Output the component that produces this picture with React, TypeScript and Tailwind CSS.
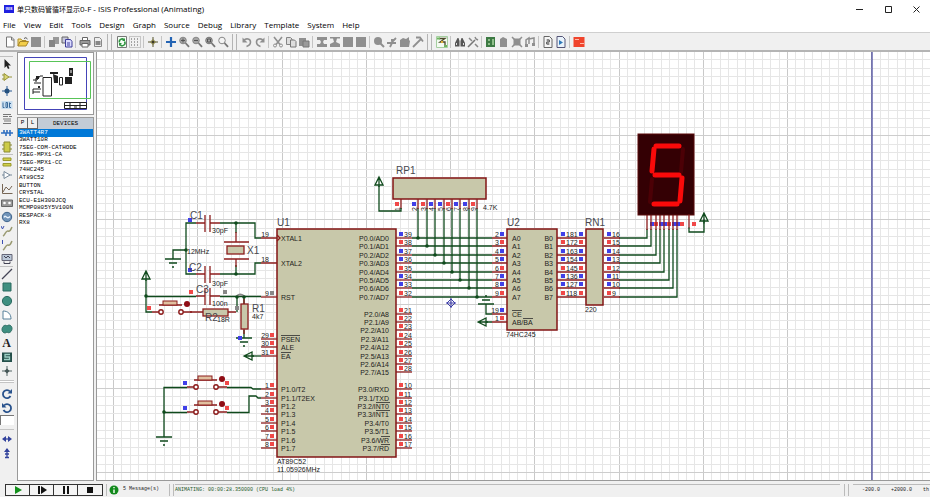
import React from "react";

type P = { children?: React.ReactNode };

const GREEN = "#0f4a1c";
const RED = "#8c1c1c";
const BODY = "#c8c8aa";
const HOT = "#f04848";
const COLD = "#4040e8";
const IDLE = "#888888";

/* Schematic row k, counted from the first pin of U1 */
const Y = (k: number) => Math.round(238 + 8.4 * k);
const BUS = [COLD, HOT, COLD, COLD, HOT, COLD, COLD, HOT];

/* ---------- icons ---------- */

const Ico = ({ children }: P) => (
  <svg viewBox="0 0 12 12" className="h-3 w-3 shrink-0" fill="none" aria-hidden="true">
    {children}
  </svg>
);

const G = "#8f8f8f";

const Zoom = ({ mark, dark }: { mark: string; dark?: boolean }) => (
  <Ico>
    <circle cx="5" cy="4.5" r="3.3" fill={mark === "" ? "#f4f4f4" : "#a4a4a4"} stroke={dark ? "#777" : "#888"} />
    <path d="M7.5 7l3.5 3.8" stroke="#777" strokeWidth="1.8" />
    <path d={mark} stroke="#555" />
  </Ico>
);

const TOOLS: Record<string, React.ReactNode> = {
  "New design": <Ico><path d="M2.5 1h5l2.500 2.500V11h-7.500z" fill="#fff" stroke="#777" /><path d="M7.500 1v3H10" stroke="#777" /></Ico>,
  "Open design": <Ico><path d="M1 10V3h3l1 1.500h4V6" fill="#f6df7a" stroke="#b0902c" /><path d="M1 10l2-4.500h8.500L9 10z" fill="#f3cf4a" stroke="#a8862a" /><path d="M7 2.500q2-2 3.500.5" stroke="#555" /></Ico>,
  "Save design": <Ico><rect x="1" y="1" width="10" height="10" fill={G} /></Ico>,
  "Import section": <Ico><path d="M5 1h6v7H5z" fill="#999" /><path d="M1 4h6v7H1z" fill="#858585" /></Ico>,
  "Export section": <Ico><path d="M1 1h6v6H1z" fill="#c8c8dc" stroke="#666" /><path d="M4.500 3.500h5l1.500 2V11H4.500z" fill="#dcdcff" stroke="#3c3c98" /><path d="M6 7h3M6 9h3" stroke="#3c3c98" /></Ico>,
  "Print": <Ico><path d="M3.500 4V1.500h5V4" fill="#fff" stroke="#666" /><path d="M1 4.500h10V9H1z" fill="#999" stroke="#666" /><path d="M3 7.500h6V11H3z" fill="#fff" stroke="#666" /></Ico>,
  "Set area": <Ico><path d="M2.500 1.500h5l2 2v7h-7z" fill="#eee" stroke="#888" /><path d="M3.500 5h5v4h-5z" fill="#888" /></Ico>,
  "Redraw": <Ico><path d="M1.500.5h9v11h-9z" fill="#f4fff4" stroke="#777" /><path d="M3.500 6.500A2.600 2.600 0 018 4M8.500 5.500A2.600 2.600 0 014 8.500" stroke="#2f9440" strokeWidth="1.500" /><path d="M9 2v3H6zM3 10V7h3z" fill="#2f9440" /></Ico>,
  "Toggle grid": <Ico><path d="M0 .5h12M0 11.500h12M.5 0v12M11.500 0v12" stroke="#c6c6c6" /><path d="M2 3h9M2 6h9M2 9h9" stroke="#555" strokeDasharray="1 2" /></Ico>,
  "Origin": <Ico><path d="M6 1v10M1 6h10" stroke="#55532c" /><path d="M6 3l3 3-3 3-3-3z" fill="#86814a" /><circle cx="6" cy="6" r="1" fill="#222" /></Ico>,
  "Pan": <Ico><path d="M6 1v10M1 6h10" stroke="#2464b4" strokeWidth="2.200" /></Ico>,
  "Zoom in": <Zoom mark="M3 4.500h4M5 2.500v4" />,
  "Zoom out": <Zoom mark="M3 4.500h4" />,
  "Zoom all": <Zoom mark="M3.500 3h3v3h-3z" dark />,
  "Zoom area": <Zoom mark="" />,
  "Undo": <Ico><path d="M2.500 4.500c3-3 7-1.500 7 1.500S7 10 5.500 10.500" stroke={G} strokeWidth="1.600" /><path d="M1.500 1.500v5h5z" fill={G} /></Ico>,
  "Redo": <Ico><path d="M9.500 4.500c-3-3-7-1.500-7 1.500S5 10 6.500 10.500" stroke={G} strokeWidth="1.600" /><path d="M10.500 1.500v5h-5z" fill={G} /></Ico>,
  "Cut": <Ico><path d="M2 1l6 7.500M10 1L4 8.500" stroke={G} strokeWidth="1.600" /><circle cx="3" cy="9.500" r="1.500" stroke={G} /><circle cx="9" cy="9.500" r="1.500" stroke={G} /></Ico>,
  "Copy": <Ico><path d="M1.500 1.500h4l1.500 1.500v5.500H1.500z" fill="#ddd" stroke="#858585" /><path d="M5.500 4h4L11 5.500V11H5.500z" fill="#ddd" stroke="#777" /></Ico>,
  "Paste": <Ico><path d="M1 2h7v8H1z" fill={G} /><path d="M5 5h6v6H5z" fill="#9a9a9a" stroke="#777" /></Ico>,
  "Block copy": <Ico><path d="M1 1h10v3H8l-1 2 1 2h3v3H1V8h3l1-2-1-2H1z" fill={G} /></Ico>,
  "Block move": <Ico><path d="M1 1h10v1.500H8L7 6l4 2v3H1V8l4-2-1-3.500H1z" fill={G} /></Ico>,
  "Block rotate": <Ico><rect x="1" y="1" width="10" height="10" fill={G} /></Ico>,
  "Block delete": <Ico><rect x="1" y="1" width="10" height="10" fill={G} /></Ico>,
  "Pick parts": <Ico><circle cx="5" cy="5" r="4" fill={G} /><path d="M7 7l4 4" stroke={G} strokeWidth="2" /></Ico>,
  "Make device": <Ico><path d="M1 7h4l5-5M4 11l2-4h4M5 4h4" stroke={G} strokeWidth="1.800" /></Ico>,
  "Packaging tool": <Ico><path d="M1 4l3-2 3 1 3-2v3l1 1-1 6H1z" fill={G} /></Ico>,
  "Decompose": <Ico><path d="M1 11l8-8" stroke={G} strokeWidth="1.800" /><path d="M4 1.500h4l3 4" stroke={G} strokeWidth="1.800" /></Ico>,
  "Wire autorouter": <Ico><path d="M.5.500h11v11H.5z" fill="#f3faf0" stroke="#a5cfa0" /><path d="M3 2.500h6L4 6h5v4" stroke="#4c4a2a" strokeWidth="1.300" /><path d="M1 1.500h3v2H1zM8 9h3v2H8z" fill="#6fb560" /><path d="M5 5h2v2H5z" fill="#dcae34" /></Ico>,
  "Search and tag": <Ico><path d="M2 5l1.500-3h1L5.500 5v5.500H1V7zM10 5L8.500 2h-1L6.500 5v5.500H11V7z" fill="#555" /><path d="M2.500 7v2M9.500 7v2" stroke="#ddd" /></Ico>,
  "Property tool": <Ico><path d="M1 11l7-7" stroke="#777" strokeWidth="1.600" /><path d="M2 2l3 3M8 1l1 2 2 1M8 8l3 3" stroke="#888" strokeWidth="1.500" /></Ico>,
  "Design explorer": <Ico><path d="M1 1h9v10H1z" fill="#3d7a44" /><path d="M3 3h2v2H3zM3 7h2v2H3zM7 3h2v6H7z" fill="#8fbf8a" /></Ico>,
  "New sheet": <Ico><path d="M2 3l3-2 4 2v8H2z" fill={G} /></Ico>,
  "Remove sheet": <Ico><path d="M2.500 2.500h7v7h-7z" fill={G} /><path d="M1 1l10 10M11 1L1 11" stroke={G} strokeWidth="1.500" /></Ico>,
  "Exit to parent": <Ico><path d="M2 9V4l3-2v6M5 3l5-1v6" stroke={G} strokeWidth="1.500" /><path d="M1 8h3v3H1zM8 7h3v3H8z" fill={G} /></Ico>,
  "Bill of materials": <Ico><path d="M2 .5h5.500L10 3v8.500H2z" fill="#f6f6f6" stroke="#666" /><path d="M6 3v6M4.500 4h3v2h-3v2h3" stroke="#666" /></Ico>,
  "Electrical rules check": <Ico><path d="M2 .5h5.500L10 3v8.500H2z" fill="#e9f3fb" stroke="#557" /><path d="M4 4v5l4-2.500z" fill="#2f78b8" /></Ico>,
  "Netlist to ARES": <Ico><path d="M.5 1h11v10H.5z" fill="#f0442c" /><path d="M2 3h4v1H2zM7 7h4v1H7z" fill="#ffb9a8" /></Ico>,
};

const TOOL_GROUPS: string[][][] = [
  [["New design", "Open design", "Save design"], ["Import section", "Export section"], ["Print", "Set area"]],
  [["Redraw", "Toggle grid"], ["Origin"], ["Pan", "Zoom in", "Zoom out", "Zoom all", "Zoom area"]],
  [["Undo", "Redo"], ["Cut", "Copy", "Paste"], ["Block copy", "Block move", "Block rotate", "Block delete"], ["Pick parts", "Make device", "Packaging tool", "Decompose"]],
  [["Wire autorouter"], ["Search and tag", "Property tool"], ["Design explorer", "New sheet", "Remove sheet", "Exit to parent"], ["Bill of materials", "Electrical rules check"], ["Netlist to ARES"]],
];

const TEAL = "#3f8f80";

const MODES: [string, React.ReactNode][] = [
  ["Selection", <path d="M3.500 1v9l2-2 1.500 3 1.500-.8L7.200 7.500H10z" fill="#222" />],
  ["Component", <path d="M3 2.500l5 3.500-5 3.500zM1 4h2M1 8h2M8 6h3" fill="#d9d676" stroke="#97943a" />],
  ["Junction dot", <><path d="M6 1v10M1 6h10" stroke="#2a5a94" /><circle cx="6" cy="6" r="2.500" fill="#24507e" /></>],
  ["Wire label", <><path d="M.5 2h11v8H.5z" fill="#c9def0" /><path d="M2 3.500v5h1.500M5 3.500v5h1.500v-5zM8.500 3.500v5H10M10 4.500H8.500" stroke="#3a6a9a" /></>],
  ["Text script", <path d="M2 1.500h8M2 3.500h5M8 3.500h3M2 6h8M3 8h7M2 10.500h8" stroke="#777" />],
  ["Bus", <path d="M0 6h12M3 3v3M6 6V3M5 6v3M9 9V6M9 3v3" stroke="#2f6fc0" strokeWidth="1.600" />],
  ["Subcircuit", <><path d="M3 1h6v10H3z" fill="#cccb48" stroke="#8a8932" /><path d="M1 4h2M1 8h2M9 4h2M9 8h2" stroke="#8a8932" /></>],
  ["Terminals", <path d="M2 2h8v2.500H2zM2 7.500h8V10H2z" fill="#d0cf48" stroke="#99982f" />],
  ["Device pins", <path d="M3 2.500l6 3.500-6 3.500zM1 6h2M9 6h2" fill="#fff" stroke="#789" />],
  ["Graph", <path d="M1.500 1v9.500h10M2 9l3-5 3 3 3-4" stroke="#765" />],
  ["Tape recorder", <><path d="M.5 3h11v6.500H.5z" fill="#999" stroke="#666" /><circle cx="3.500" cy="6" r="1.300" fill="#fff" /><circle cx="8.500" cy="6" r="1.300" fill="#fff" /></>],
  ["Generator", <><circle cx="6" cy="6" r="4.700" fill="#6f93b8" stroke="#40648c" /><path d="M3 6.500c1.500-4 2.500 3 6-1" stroke="#e7f1fb" strokeWidth="1.400" /></>],
  ["Voltage probe", <><path d="M0 1l1.500 3L3 1" stroke="#3b4fb0" /><path d="M2 11c2-1 3-6 5-5s3-2 4-4" stroke="#9a9a72" strokeWidth="1.500" /></>],
  ["Current probe", <><path d="M1.500 1v4" stroke="#3b4fb0" /><path d="M2 11c2-1 3-6 5-5s3-2 4-4" stroke="#9a9a72" strokeWidth="1.500" /></>],
  ["Virtual instruments", <><path d="M1 1.500h10v6H1z" fill="#b9c6d6" stroke="#667" /><path d="M3 3l2 2 2-2 2 2M3 8.500v2h6v-2" stroke="#445" /></>],
  ["2D line", <path d="M1 11L11 1" stroke="#445" strokeWidth="1.200" />],
  ["2D box", <path d="M2 2h8v8H2z" fill={TEAL} stroke="#2c6a60" />],
  ["2D circle", <circle cx="6" cy="6" r="4.600" fill={TEAL} stroke="#2c6a60" />],
  ["2D arc", <path d="M2 2c5 0 8 3 8 8H2z" fill="#fff" stroke="#56809a" />],
  ["2D path", <path d="M6 3c2-2 5-.5 5 2.500S8 11 6 9c-2 2-5 .5-5-2.500S4 1 6 3z" fill={TEAL} stroke="#2c6a60" />],
  ["2D text", null],
  ["2D symbol", <><path d="M1 1.500h10v9.500H1z" fill="#244f4a" /><path d="M9 3.500H4V6h4.500v2.500H3" stroke="#9ed1c6" strokeWidth="1.300" /></>],
  ["2D marker", <><path d="M6 1v10M1 6h10" stroke="#566" /><path d="M6 3.500L8.500 6 6 8.500 3.500 6z" fill="#455" /></>],
];

/* ---------- schematic parts ---------- */

const W = ({ d, c = GREEN }: { d: string; c?: string }) => <path d={d} stroke={c} strokeWidth="1.300" fill="none" />;
const Sq = ({ x, y, c }: { x: number; y: number; c: string }) => <rect x={x - 2} y={y - 2} width="4" height="4" fill={c} />;
const Dot = ({ x, y }: { x: number; y: number }) => <circle cx={x} cy={y} r="1.800" fill={GREEN} />;
const Box = ({ x, y, w, h }: { x: number; y: number; w: number; h: number }) => (
  <rect x={x} y={y} width={w} height={h} fill={BODY} stroke="#821414" strokeWidth="1.500" />
);
const T = ({ x, y, end, bar, children }: P & { x: number; y: number; end?: boolean; bar?: [number, number] }) => (
  <>
    <text x={x} y={y} textAnchor={end ? "end" : "start"} className="fill-[#1c1c1c] text-[7px]">{children}</text>
    {bar && <path d={`M${bar[0]} ${y - 6.5}H${bar[1]}`} stroke="#2c2c2c" strokeWidth=".8" />}
  </>
);
const Ref = ({ x, y, children }: P & { x: number; y: number }) => (
  <text x={x} y={y} className="fill-[#48484e] text-[10px]">{children}</text>
);
const Ground = ({ x, y, up }: { x: number; y: number; up?: boolean }) => {
  const s = up ? -1 : 1;
  return <W d={`M${x - 8} ${y}h16M${x - 4} ${y + 4 * s}h8M${x - 1} ${y + 8 * s}h2`} />;
};
const PowerUp = ({ x, y }: { x: number; y: number }) => <W d={`M${x} ${y}l4 8h-8zM${x} ${y}v10`} />;
const ArrowLeft = ({ x, y }: { x: number; y: number }) => <W d={`M${x} ${y}l8-4v8zM${x} ${y}h10`} />;

const Cap = ({ y }: { y: number }) => (
  <W c={RED} d={`M196 ${y}h9M205 ${y - 8}v17M210 ${y - 8}v17M210 ${y}h10`} />
);
const Push = ({ x, y }: { x: number; y: number }) => (
  <g>
    <W c={RED} d={`M${x - 9} ${y}h7M${x + 22} ${y}h9M${x - 2} ${y - 7}h23`} />
    <rect x={x + 2} y={y - 11} width="14" height="4" fill="#e0c0a0" stroke={RED} />
    <circle cx={x} cy={y} r="2.200" fill="#fff" stroke={RED} strokeWidth="1.400" />
    <circle cx={x + 20} cy={y} r="2.200" fill="#fff" stroke={RED} strokeWidth="1.400" />
    <circle cx={x + 26} cy={y - 8} r="3" fill="#8f0c14" />
  </g>
);

const PORT2 = ["P2.0/A8", "P2.1/A9", "P2.2/A10", "P2.3/A11", "P2.4/A12", "P2.5/A13", "P2.6/A14", "P2.7/A15"];
const PORT3 = ["P3.0/RXD", "P3.1/TXD", "P3.2/INT0", "P3.3/INT1", "P3.4/T0", "P3.5/T1", "P3.6/WR", "P3.7/RD"];
const PORT3_BAR: Record<number, number> = { 2: 376, 3: 376, 6: 381, 7: 381 };
const PORT1 = ["P1.0/T2", "P1.1/T2EX", "P1.2", "P1.3", "P1.4", "P1.5", "P1.6", "P1.7"];

const RightPin = ({ k, n, name, c = HOT, bar }: { k: number; n: number; name: string; c?: string; bar?: [number, number] }) => (
  <g>
    <W c={RED} d={`M396 ${Y(k)}h16`} />
    <Sq x={401} y={Y(k) - 4} c={c} />
    <T x={404} y={Y(k) - 1}>{n}</T>
    <T x={389} y={Y(k) + 3} end bar={bar}>{name}</T>
  </g>
);
const LeftPin = ({ k, n, name, c = HOT, bar }: { k: number; n: number; name: string; c?: string; bar?: [number, number] }) => (
  <g>
    <W c={RED} d={`M261 ${Y(k)}h16`} />
    <Sq x={272} y={Y(k) - 4} c={c} />
    <T x={269} y={Y(k) - 1} end>{n}</T>
    <T x={281} y={Y(k) + 3} bar={bar}>{name}</T>
  </g>
);

const Microcontroller = () => (
  <g>
    <Box x={277} y={229} w={119} h={228} />
    <Ref x={277} y={226}>U1</Ref>
    <T x={277} y={464}>AT89C52</T>
    <T x={277} y={472}>11.05926MHz</T>
    {BUS.map((c, i) => <RightPin key={i} k={i} n={39 - i} name={`P0.${i}/AD${i}`} c={c} />)}
    {PORT2.map((s, i) => <RightPin key={s} k={9 + i} n={21 + i} name={s} />)}
    {PORT3.map((s, i) => <RightPin key={s} k={18 + i} n={10 + i} name={s} bar={PORT3_BAR[i] ? [PORT3_BAR[i], 390] : undefined} />)}
    {PORT1.map((s, i) => <LeftPin key={s} k={18 + i} n={1 + i} name={s} />)}
    <LeftPin k={7} n={9} name="RST" c={IDLE} />
    <LeftPin k={12} n={29} name="PSEN" bar={[281, 300]} />
    <LeftPin k={13} n={30} name="ALE" />
    <LeftPin k={14} n={31} name="EA" bar={[281, 291]} />
    <W c={RED} d={`M261 ${Y(0)}h16M261 ${Y(3)}h16M277 ${Y(0) - 3}l3 3-3 3`} />
    <T x={269} y={Y(0) - 1} end>19</T>
    <T x={269} y={Y(3) - 1} end>18</T>
    <T x={281} y={Y(0) + 3}>XTAL1</T>
    <T x={281} y={Y(3) + 3}>XTAL2</T>
  </g>
);

const Oscillator = () => (
  <g>
    <W d="M196 223H186V274H196M220 223H255V238H261M220 274H255V263H261M186 250H173V259M236 223v10M236 274v-9" />
    <Cap y={223} />
    <Cap y={274} />
    <W c={RED} d="M224 242h25M224 259h25M236 232v10M236 259v8" />
    <rect x="227" y="246" width="17" height="8" fill={BODY} stroke={RED} strokeWidth="1.300" />
    <Dot x={236} y={223} /><Dot x={236} y={274} /><Dot x={186} y={250} />
    <Ground x={173} y={259} />
    <Sq x={190} y={220} c={COLD} /><Sq x={190} y={270} c={COLD} />
    <Ref x={190} y={219}>C1</Ref><Ref x={189} y={271}>C2</Ref><Ref x={247} y={254}>X1</Ref>
    <T x={212} y={233}>30pF</T><T x={212} y={286}>30pF</T><T x={187} y={254}>12MHz</T>
  </g>
);

const Reset = () => (
  <g>
    <PowerUp x={146} y={271} />
    <W d="M146 280V312H152M146 296.500H196M220 296.500H261M237 312V296.500M244 296V304M244 330V338" />
    <Cap y={296} />
    <Push x={161} y={312} />
    <W c={RED} d="M190 312h13M228 312h8M244 299v5M244 329v5" />
    <rect x="203" y="309" width="25" height="7" fill={BODY} stroke={RED} strokeWidth="1.300" />
    <rect x="241" y="304" width="7" height="25" fill={BODY} stroke={RED} strokeWidth="1.300" />
    <path d="M237 296q3-3 7 0" stroke={IDLE} strokeWidth="2" fill="none" />
    <Dot x={146} y={296} /><Dot x={237} y={297} /><Dot x={244} y={297} />
    <Ground x={244} y={338} />
    <Sq x={149} y={308} c={HOT} /><Sq x={191} y={292} c={HOT} /><Sq x={225} y={292} c={IDLE} />
    <Sq x={237} y={308} c={IDLE} /><Sq x={240} y={338} c={COLD} />
    <Ref x={196} y={293}>C3</Ref><Ref x={252} y={312}>R1</Ref><Ref x={205} y={321}>R2</Ref>
    <T x={212} y={306}>100n</T><T x={252} y={319}>4k7</T><T x={217} y={322}>18R</T>
    <ArrowLeft x={244} y={Y(14)} />
    <W d={`M252 ${Y(14)}h9`} />
  </g>
);

const Buttons = () => (
  <g>
    <W d={`M187 387.500H164V437M164 412.500H187M227 387.500H251L253 ${Y(18)}H261M227 412.500H249V396H256L258 ${Y(19)}H261`} />
    <Push x={196} y={387} />
    <Push x={196} y={412} />
    <Dot x={164} y={412} />
    <Ground x={164} y={437} />
    <Sq x={185} y={383} c={COLD} /><Sq x={227} y={383} c={HOT} />
    <Sq x={185} y={408} c={COLD} /><Sq x={227} y={408} c={HOT} />
  </g>
);

const ResistorPack = () => (
  <g>
    <Box x={393} y={178} w={93} h={21} />
    <Ref x={396} y={174}>RP1</Ref>
    <T x={483} y={210}>4.7K</T>
    <W c={RED} d="M401 199v10" />
    <W d="M401 208V211H379V186" />
    <PowerUp x={379} y={177} />
    {[HOT, ...BUS].map((c, i) => {
      const x = i === 0 ? 401 : Math.round(410 + 8.4 * i);
      return (
        <g key={i}>
          {i > 0 && <W d={`M${x} 208V${Y(i - 1)}`} />}
          {i > 0 && <W c={RED} d={`M${x} 199v10`} />}
          {i > 0 && <Dot x={x} y={Y(i - 1)} />}
          <Sq x={x - 4} y={204} c={c} />
          <text transform={`translate(${x - 1} 211) rotate(-90)`} className="fill-[#1c1c1c] text-[7px]">{i + 1}</text>
        </g>
      );
    })}
  </g>
);

const Buffer = () => (
  <g>
    <Box x={507} y={229} w={50} h={101} />
    <Ref x={507} y={226}>U2</Ref>
    <T x={506} y={337}>74HC245</T>
    <Box x={586} y={229} w={17} h={76} />
    <Ref x={585} y={226}>RN1</Ref>
    <T x={585} y={312}>220</T>
    {BUS.map((c, i) => {
      const y = Y(i);
      const x = Math.round(647 + 4.3 * i);
      return (
        <g key={i}>
          <W d={`M412 ${y}H492M619 ${y}H${x}V229`} />
          <W c={RED} d={`M492 ${y}h15M557 ${y}h29M604 ${y}h16M${x} 215v15`} />
          <T x={499} y={y - 1} end>{i + 2}</T>
          <Sq x={502} y={y - 4} c={c} />
          <T x={512} y={y + 3}>{`A${i}`}</T>
          <T x={553} y={y + 3} end>{`B${i}`}</T>
          <Sq x={563} y={y - 4} c={c} />
          <T x={566} y={y - 1}>{`${18 - i}${i + 1}`}</T>
          <Sq x={581} y={y - 4} c={c} />
          <Sq x={609} y={y - 4} c={c} />
          <T x={612} y={y - 1}>{16 - i}</T>
          <Sq x={x + 5} y={224} c={c} />
        </g>
      );
    })}
    <W c={RED} d={`M492 ${Y(9)}h15M492 ${Y(10)}h15`} />
    <W d={`M492 ${Y(9)}H486V304M486 ${Y(10)}h6`} />
    <Ground x={486} y={304} up />
    <ArrowLeft x={478} y={Y(10)} />
    <T x={499} y={Y(9) - 1} end>19</T>
    <T x={499} y={Y(10) - 1} end>1</T>
    <Sq x={502} y={Y(9) - 4} c={COLD} />
    <Sq x={502} y={Y(10) - 4} c={HOT} />
    <T x={512} y={Y(9) + 3} bar={[512, 522]}>CE</T>
    <T x={512} y={Y(10) + 3} bar={[523, 533]}>AB/BA</T>
  </g>
);

const SevenSegment = () => (
  <g strokeLinecap="round">
    <rect x="638" y="134" width="56" height="81" fill="#340004" stroke="#5a0a0a" />
    <path d="M683 149L681 172M652 179L650 202" stroke="#4c0006" strokeWidth="4" />
    <path d="M656 146H679M654 149L652 171M655 175H679M682 178L680 201M654 204H677" stroke="#fa0a0a" strokeWidth="5" fill="none" />
    <W c={RED} d="M689 215v13" />
    <W d="M689 228V232H704V220" />
    <PowerUp x={704} y={213} />
    <Sq x={694} y={224} c={HOT} />
  </g>
);

const Grid = () => (
  <g shapeRendering="crispEdges">
    {Array.from({ length: 240 }, (_, i) => {
      const x = Math.round(96.2 + 8.425 * i);
      return <path key={i} d={`M${x + 0.5} 0V2000`} stroke={(i - 2) % 10 === 0 ? "#c9c9c9" : "#e6e6e6"} />;
    })}
    {Array.from({ length: 160 }, (_, i) => {
      const y = Math.round(51 + 8.42 * i);
      return <path key={i} d={`M0 ${y + 0.5}H2400`} stroke={i % 10 === 0 ? "#cdcdcd" : "#e6e6e6"} />;
    })}
  </g>
);

const Schematic = () => (
  <svg className="block h-full w-full font-['Liberation_Sans',sans-serif]" role="img" aria-label="Schematic">
    <g transform="translate(-97 -52)">
      <Grid />
      <path d="M872 0V2000" stroke="#3c3c98" strokeWidth="1.200" />
      <Buffer />
      <ResistorPack />
      <Microcontroller />
      <Oscillator />
      <Reset />
      <Buttons />
      <SevenSegment />
      <path d="M451 299l4 4-4 4-4-4zM451 298v10M446 303h10" stroke="#3c3ca8" fill="none" />
    </g>
  </svg>
);

/* ---------- window chrome ---------- */

const MENUS = ["File", "View", "Edit", "Tools", "Design", "Graph", "Source", "Debug", "Library", "Template", "System", "Help"];
const DEVICES = ["3WATT4R7", "3WATT10R", "7SEG-COM-CATHODE", "7SEG-MPX1-CA", "7SEG-MPX1-CC", "74HC245", "AT89C52", "BUTTON", "CRYSTAL", "ECU-E1H300JCQ", "MCMP0805Y5V100N", "RESPACK-8", "RX8"];

const TitleBar = () => (
  <header className="flex h-[18px] shrink-0 items-center bg-white pl-1">
    <span className="mr-[3px] flex h-2 w-[10px] items-center justify-center overflow-hidden bg-[#2020e0] text-[4px] font-bold text-white">ISIS</span>
    <h1 className="text-[8px] leading-4 whitespace-nowrap text-black">
      <span className="text-[7px]">单只数码管循环显示</span>0-F - ISIS Professional (Animating)
    </h1>
    <div className="ml-auto flex">
      <button aria-label="Minimize" className="flex h-[18px] w-[29px] items-center justify-center"><svg className="h-[7px] w-[7px]"><path d="M0 3.500h7" stroke="#222" /></svg></button>
      <button aria-label="Maximize" className="flex h-[18px] w-[29px] items-center justify-center"><svg className="h-[7px] w-[7px]"><path d="M.5.500h6v6h-6z" fill="none" stroke="#222" /></svg></button>
      <button aria-label="Close" className="flex h-[18px] w-[27px] items-center justify-center"><svg className="h-[7px] w-[7px]"><path d="M.5.500l6 6M6.500.500l-6 6" stroke="#222" /></svg></button>
    </div>
  </header>
);

const ToolBar = () => (
  <div role="toolbar" className="flex h-5 shrink-0 items-center border-t border-b-2 border-t-[#cfcfcf] border-b-[#b4b4b4] bg-[#f0f0f0] pl-[3px]">
    {TOOL_GROUPS.map((block, b) => (
      <React.Fragment key={b}>
        {b > 0 && <span className="mx-[3px] h-4 w-[5px] border-x border-[#b4b4b4]" />}
        {block.map((group, g) => (
          <React.Fragment key={g}>
            {g > 0 && <span className="mx-[2px] h-3 w-px bg-[#c4c4c4]" />}
            {group.map((name) => (
              <button key={name} aria-label={name} className="flex h-4 w-[13px] items-center justify-center">{TOOLS[name]}</button>
            ))}
          </React.Fragment>
        ))}
      </React.Fragment>
    ))}
  </div>
);

const ModeBar = () => (
  <nav aria-label="Modes" className="flex w-[17px] shrink-0 flex-col items-start bg-[#f0f0f0] pt-1">
    {MODES.map(([name, icon], i) => (
      <button
        key={name}
        aria-label={name}
        className={`flex h-[14px] w-[13px] shrink-0 items-center justify-center ${i === 0 || i === 7 || i === 15 ? "border-t border-[#c0c0c0]" : ""}`}
      >
        {icon ? <Ico>{icon}</Ico> : <span className="font-['Liberation_Serif',serif] text-[12px] leading-3 font-bold text-[#222]">A</span>}
      </button>
    ))}
    <span className="mt-[2px] mb-1 h-[3px] w-[14px] shrink-0 border-y border-[#c4c4c4] bg-white" />
    <button aria-label="Rotate clockwise" className="flex h-[14px] w-[13px] shrink-0 items-center justify-center">
      <Ico><path d="M9 3.500A4 4 0 109.500 8" stroke="#27518c" strokeWidth="1.800" /><path d="M11 1v4.500H6.500z" fill="#27518c" /></Ico>
    </button>
    <button aria-label="Rotate anticlockwise" className="flex h-[14px] w-[13px] shrink-0 items-center justify-center">
      <Ico><path d="M3 3.500A4 4 0 112.500 8" stroke="#27518c" strokeWidth="1.800" /><path d="M1 1v4.500h4.500z" fill="#27518c" /></Ico>
    </button>
    <input aria-label="Rotation angle" className="h-[10px] w-[14px] shrink-0 border-t border-l border-[#777] bg-white text-[6px]" />
    <span className="mt-1 mb-[2px] h-px w-[14px] shrink-0 bg-[#c4c4c4]" />
    <button aria-label="Mirror horizontally" className="flex h-[14px] w-[13px] shrink-0 items-center justify-center">
      <Ico><path d="M3 6h6" stroke="#32429c" strokeWidth="1.300" /><path d="M1 6l4-3v6zM11 6L7 3v6z" fill="#32429c" /></Ico>
    </button>
    <button aria-label="Mirror vertically" className="flex h-[14px] w-[13px] shrink-0 items-center justify-center">
      <Ico><path d="M6 2v9M4 10.500h4M4 7h4" stroke="#32429c" strokeWidth="1.300" /><path d="M6 1l3 4H3z" fill="#32429c" /></Ico>
    </button>
  </nav>
);

const Overview = () => (
  <div className="h-[63px] border border-[#999] bg-white">
    <svg className="block h-[61px] w-full" viewBox="18 53 74 61" preserveAspectRatio="xMinYMin meet" fill="none" role="img" aria-label="Overview">
      <path d="M24.500 57.500h62v52h-62z" stroke="#4444b8" />
      <path d="M29.500 61.500h61v37h-61z" stroke="#58c458" />
      <path d="M43 77.500h8.500v18.500H43zM59.500 77.500h3v7.500h-3zM33 80h4l3-4h3M34 83h7M33 94v-5h8M33 92h7M36 78v4" stroke="#222" />
      <path d="M50 72h8v2h-8zM53 74l5 2v7h-4zM65 77h7v7h-7zM69 68h4v8h-4zM36 76h3v3h-3zM38 86h2v2h-2z" fill="#222" />
      <path d="M71 70v3" stroke="#fff" />
      <path d="M64.500 102.500h22v6h-22zM64 105.500h22M70 103v5M80 103v5M74 107h3" stroke="#222" />
    </svg>
  </div>
);

const SidePanel = () => (
  <aside className="flex w-[77px] shrink-0 flex-col bg-[#f0f0f0]">
    <Overview />
    <div className="mt-[2px] flex min-h-0 flex-1 flex-col border border-[#999] bg-white font-['Liberation_Mono',monospace] text-[6px] text-black">
      <div className="flex h-[11px] shrink-0 bg-[#c3ccd6]">
        <button className="w-[10px] border-r border-b border-[#666] bg-[#f0f0f0] leading-[10px]">P</button>
        <button className="w-[10px] border-r border-b border-[#666] bg-[#f0f0f0] leading-[10px]">L</button>
        <h2 className="flex-1 text-center leading-[11px]">DEVICES</h2>
      </div>
      <ul className="grid h-[98px] shrink-0 auto-rows-fr">
        {DEVICES.map((d, i) => (
          <li key={d} className={`flex items-center pl-px leading-[6px] whitespace-nowrap ${i === 0 ? "bg-[#0078d7] text-white" : ""}`}>{d}</li>
        ))}
      </ul>
    </div>
  </aside>
);

const RUN: [string, React.ReactNode][] = [
  ["Play", <path d="M3 2l7 4-7 4z" fill="#14901c" />],
  ["Step", <path d="M2 2h2v8H2zM5 2l6 4-6 4z" fill="#111" />],
  ["Pause", <path d="M3 2h2v8H3zM7 2h2v8H7z" fill="#111" />],
  ["Stop", <path d="M3 3h6v6H3z" fill="#111" />],
];

const StatusBar = () => (
  <footer className="flex h-4 shrink-0 items-center bg-[#f0f0f0] pt-px pl-[5px] font-['Liberation_Mono',monospace] text-[5px] text-[#222]">
    <div className="flex h-3 border border-[#333]">
      {RUN.map(([name, icon]) => (
        <button key={name} aria-label={name} className="flex w-6 items-center justify-center border-r border-[#333] bg-[#f4f4f4] last:border-r-0"><Ico>{icon}</Ico></button>
      ))}
    </div>
    <span className="mr-[2px] ml-[3px] h-3 w-px bg-[#bbb]" />
    <Ico><circle cx="5" cy="6" r="4.500" fill="#128a1c" /><path d="M5 5.500v3.500M5 3v1.300" stroke="#fff" strokeWidth="1.400" /></Ico>
    <span className="w-12 pl-[2px]">5 Message(s)</span>
    <span className="mr-px h-3 w-[5px] border-x border-[#bbb]" />
    <span className="h-3 flex-1 border-t border-[#bbb] leading-[11px] text-[#1e5a2a]">ANIMATING: 00:00:28.350000 (CPU load 4%)</span>
    <span className="mx-1 h-3 w-[5px] border-x border-[#bbb]" />
    <span className="flex h-3 w-[77px] justify-between border-t border-[#bbb] pr-px pl-[9px] leading-[11px]">
      <span>-200.0</span><span>+2000.0</span><span>th</span>
    </span>
  </footer>
);

export default function App() {
  return (
    <div className="flex h-screen flex-col overflow-hidden bg-[#f0f0f0] font-['Open_Sans','Noto_Sans_CJK_SC',sans-serif]">
      <TitleBar />
      <div role="menubar" className="flex h-[14px] shrink-0 gap-2 bg-white pl-[3px] text-[8px] leading-[14px] text-black">
        {MENUS.map((m) => <button key={m} role="menuitem">{m}</button>)}
      </div>
      <ToolBar />
      <main className="flex min-h-0 flex-1">
        <ModeBar />
        <SidePanel />
        <section className="ml-[2px] min-w-0 flex-1 overflow-hidden border-b border-l border-[#999] bg-white">
          <Schematic />
        </section>
      </main>
      <StatusBar />
    </div>
  );
}
